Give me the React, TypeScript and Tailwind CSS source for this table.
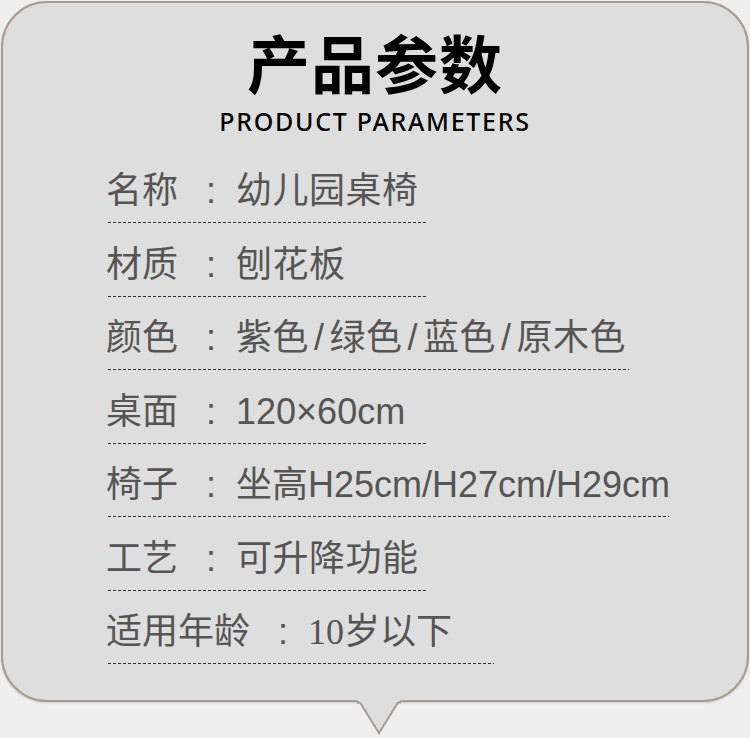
const rows = [
  { label: "名称", value: ["幼儿园桌椅"], line: "w-[320px]" },
  { label: "材质", value: ["刨花板"], line: "w-[320px]" },
  { label: "颜色", value: ["紫色", "绿色", "蓝色", "原木色"], line: "w-[521px]" },
  { label: "桌面", value: ["120×60cm"], line: "w-[320px]", latin: true },
  { label: "椅子", value: ["坐高H25cm/H27cm/H29cm"], line: "w-[561px]", latin: true },
  { label: "工艺", value: ["可升降功能"], line: "w-[320px]" },
  { label: "适用年龄", value: ["10岁以下"], line: "w-[386px]", serif: true },
];

const App = () => {
  return (
    <div className="w-[750px] h-[738px] bg-[#efefef] pt-px pl-px">
      <div className="relative w-[748px] h-[701px] rounded-[46px] border-2 border-[#a99c8d] bg-[#dedede] shadow-[0_1px_2px_rgba(0,0,0,0.15)]">
        <div className="flex flex-col items-center pt-[26px]">
          <h1 className="text-[63px] leading-[64px] font-bold text-black tracking-[1px] font-['Noto_Sans_CJK_SC',sans-serif]">
            产品参数
          </h1>
          <p className="mt-[14px] text-[25px] leading-[28px] font-medium text-black tracking-[1.7px] font-['Noto_Sans',sans-serif]">
            PRODUCT PARAMETERS
          </p>
        </div>

        <div className="mt-[31px] pl-[103px] flex flex-col font-['Liberation_Sans','Noto_Sans_CJK_SC',sans-serif] text-[#555]">
          {rows.map((r) => (
            <div key={r.label} className="flex flex-col mb-[16.5px]">
              <div className="flex items-center h-[50px] text-[36px] leading-[50px]">
                <span>{r.label}</span>
                <span className="w-[58px] pl-[28px]">:</span>
                <span
                  className={
                    r.serif
                      ? "font-['Liberation_Serif','Noto_Sans_CJK_SC',serif]"
                      : r.latin
                        ? ""
                        : "tracking-[0.5px]"
                  }
                >
                  {r.value.map((v, i) => (
                    <span key={v}>
                      {i > 0 && <span className="px-[5px]">/</span>}
                      {v}
                    </span>
                  ))}
                </span>
              </div>
              <div
                className={`${r.line} ml-[2px] mt-[6px] h-px bg-[repeating-linear-gradient(90deg,#2f2f2f_0_3px,transparent_3px_5px)]`}
              />
            </div>
          ))}
        </div>

        <svg
          className="absolute left-[354px] top-[697px]"
          width="44"
          height="36"
          viewBox="0 0 44 36"
        >
          <path d="M0 0 L2 2 L22 34 L42 2 L44 0 Z" fill="#dedede" />
          <path d="M0 2.5 L3 2.5 L22 33 L41 2.5 L44 2.5" fill="none" stroke="#a99c8d" strokeWidth="2" />
          <rect x="3" y="0" width="38" height="2" fill="#dedede" />
        </svg>
      </div>
    </div>
  );
};

export default App;
